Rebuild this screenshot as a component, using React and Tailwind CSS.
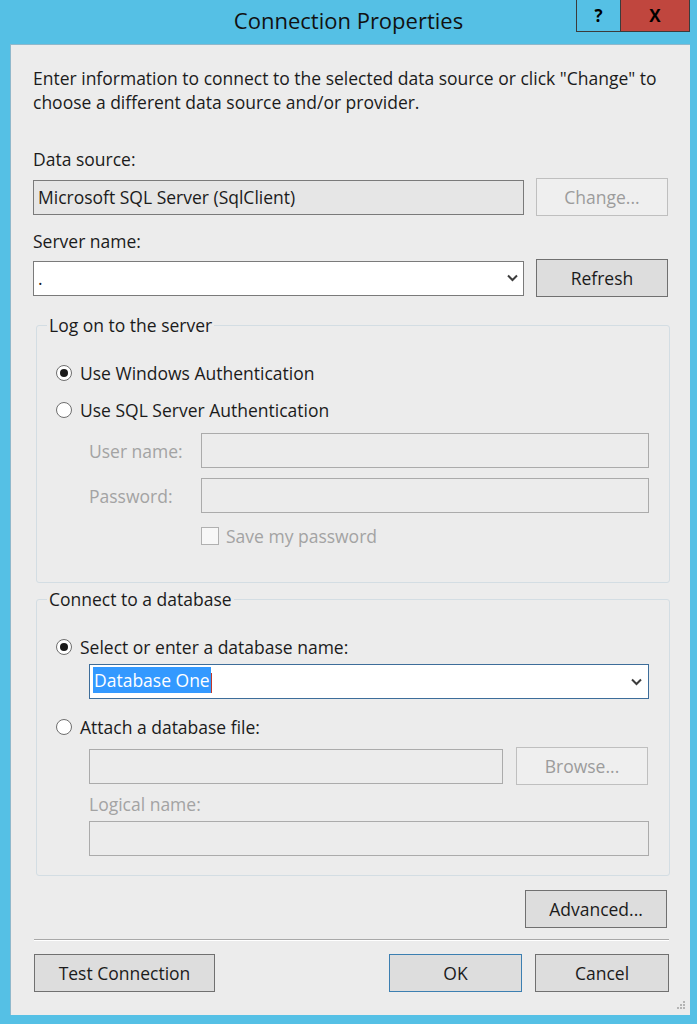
import React from 'react';

const font = { fontFamily: '"Open Sans", "Noto Sans", sans-serif' };

function Chevron() {
  return (
    <svg width="11" height="8" viewBox="0 0 11 8" className="shrink-0">
      <polyline points="1,1.5 5.5,6 10,1.5" fill="none" stroke="#3c3c3c" strokeWidth="2" />
    </svg>
  );
}

function Radio({ checked, label }) {
  return (
    <div className="flex items-center h-[20px]">
      <span className="w-[16px] h-[16px] rounded-full border border-[#6e6e6e] bg-white flex items-center justify-center ml-[19px] shrink-0">
        {checked && <span className="w-[8px] h-[8px] rounded-full bg-[#1a1a1a]" />}
      </span>
      <span className="ml-[8px] text-[#1b1b1b]">{label}</span>
    </div>
  );
}

function WinButton({ children, disabled, primary, className = '' }) {
  let look = 'bg-[#dddddd] border-[#707070] text-[#1b1b1b]';
  if (disabled) look = 'bg-[#efefef] border-[#bfbfbf] text-[#9c9c9c]';
  if (primary) look = 'bg-[#dddddd] border-[#3c7fb1] text-[#1b1b1b]';
  return (
    <div className={`h-[38px] border flex items-center justify-center shrink-0 ${look} ${className}`}>
      {children}
    </div>
  );
}

export default function App() {
  return (
    <div className="w-[697px] h-[1024px] bg-[#55c0e5] flex flex-col text-[17.5px] leading-[20px]" style={font}>
      {/* title bar */}
      <div className="h-[44px] grid grid-cols-[1fr_auto_1fr] shrink-0">
        <div />
        <div className="text-[22px] leading-[24px] text-[#111] pt-[8px]">Connection Properties</div>
        <div className="flex justify-end pr-[7px]">
          <div className="flex h-[32px] border border-[#3b3b3b] border-t-0">
            <div className="w-[44px] flex items-center justify-center text-[17px] font-bold text-black border-r border-[#3b3b3b]">?</div>
            <div className="w-[68px] bg-[#c0463e] flex items-center justify-center text-[17px] font-bold text-black">X</div>
          </div>
        </div>
      </div>

      {/* body */}
      <div className="ml-[10px] w-[680px] h-[971px] bg-[#ececec] border-t border-l border-[#8fb8cc] flex flex-col text-[#1b1b1b]">
        <p className="ml-[22px] mt-[21px] leading-[24px] pr-[10px]">
          Enter information to connect to the selected data source or click "Change" to choose a different data source and/or provider.
        </p>

        <div className="ml-[22px] mt-[35px]">Data source:</div>
        <div className="ml-[22px] mt-[9px] flex items-center">
          <div className="w-[491px] h-[35px] bg-[#e6e6e6] border border-[#7a7a7a] flex items-center pl-[4px]">
            Microsoft SQL Server (SqlClient)
          </div>
          <WinButton disabled className="ml-[12px] w-[132px]">Change...</WinButton>
        </div>

        <div className="ml-[22px] mt-[15px]">Server name:</div>
        <div className="ml-[22px] mt-[8px] flex items-center">
          <div className="w-[491px] h-[35px] bg-white border border-[#7a7a7a] flex items-center pl-[4px] pr-[5px]">
            <span className="flex-1">.</span>
            <Chevron />
          </div>
          <WinButton className="ml-[12px] w-[132px]">Refresh</WinButton>
        </div>

        {/* log on group */}
        <fieldset className="ml-[25px] mt-[18px] w-[634px] border border-[#d3dde3] rounded-[3px] pb-[36px]">
          <legend className="ml-[10px] px-[2px] leading-[20px]">Log on to the server</legend>
          <div className="pt-[28px] flex flex-col">
            <Radio checked label="Use Windows Authentication" />
            <div className="mt-[17px]"><Radio label="Use SQL Server Authentication" /></div>
            <div className="mt-[13px] flex items-center">
              <span className="ml-[52px] w-[112px] text-[#a3a3a3]">User name:</span>
              <div className="w-[448px] h-[35px] border border-[#ababab] bg-[#ececec]" />
            </div>
            <div className="mt-[10px] flex items-center">
              <span className="ml-[52px] w-[112px] text-[#a3a3a3]">Password:</span>
              <div className="w-[448px] h-[35px] border border-[#ababab] bg-[#ececec]" />
            </div>
            <div className="mt-[13px] flex items-center ml-[164px]">
              <span className="w-[18px] h-[18px] border border-[#b0b0b0] bg-[#f7f7f7]" />
              <span className="ml-[7px] text-[#a3a3a3]">Save my password</span>
            </div>
          </div>
        </fieldset>

        {/* database group */}
        <fieldset className="ml-[25px] mt-[6px] w-[634px] border border-[#d3dde3] rounded-[3px] pb-[19px]">
          <legend className="ml-[10px] px-[2px] leading-[20px]">Connect to a database</legend>
          <div className="pt-[28px] flex flex-col">
            <Radio checked label="Select or enter a database name:" />
            <div className="mt-[7px] ml-[52px] w-[560px] h-[35px] bg-white border border-[#3d6d9a] flex items-center pl-[3px] pr-[6px]">
              <span className="flex-1">
                <span className="bg-[#3399ff] text-white px-[1px] py-[1px]">Database One</span>
                <span className="inline-block w-[1px] h-[20px] bg-[#c0392b] align-middle" />
              </span>
              <Chevron />
            </div>
            <div className="mt-[18px]"><Radio label="Attach a database file:" /></div>
            <div className="mt-[10px] ml-[52px] flex items-center">
              <div className="w-[414px] h-[35px] border border-[#ababab] bg-[#ececec]" />
              <WinButton disabled className="ml-[13px] w-[132px]">Browse...</WinButton>
            </div>
            <div className="mt-[9px] ml-[52px] text-[#a3a3a3]">Logical name:</div>
            <div className="mt-[7px] ml-[52px] w-[560px] h-[35px] border border-[#ababab] bg-[#ececec]" />
          </div>
        </fieldset>

        <div className="mt-[14px] flex justify-end pr-[23px]">
          <WinButton className="w-[142px]">Advanced...</WinButton>
        </div>

        <div className="mt-[11px] ml-[23px] w-[635px] h-[2px] bg-[#a8a8a8] border-b border-white" />

        <div className="mt-[13px] ml-[23px] w-[635px] flex items-center">
          <WinButton className="w-[181px]">Test Connection</WinButton>
          <div className="flex-1" />
          <WinButton primary className="w-[133px]">OK</WinButton>
          <WinButton className="ml-[13px] w-[134px]">Cancel</WinButton>
        </div>

        <div className="flex-1 flex items-end justify-end pr-[5px] pb-[4px]">
          <svg width="10" height="10" viewBox="0 0 10 10">
            <g fill="#b5b5b5">
              <rect x="8" y="0" width="2" height="2" />
              <rect x="5" y="3" width="2" height="2" />
              <rect x="8" y="3" width="2" height="2" />
              <rect x="2" y="6" width="2" height="2" />
              <rect x="5" y="6" width="2" height="2" />
              <rect x="8" y="6" width="2" height="2" />
            </g>
          </svg>
        </div>
      </div>
    </div>
  );
}
